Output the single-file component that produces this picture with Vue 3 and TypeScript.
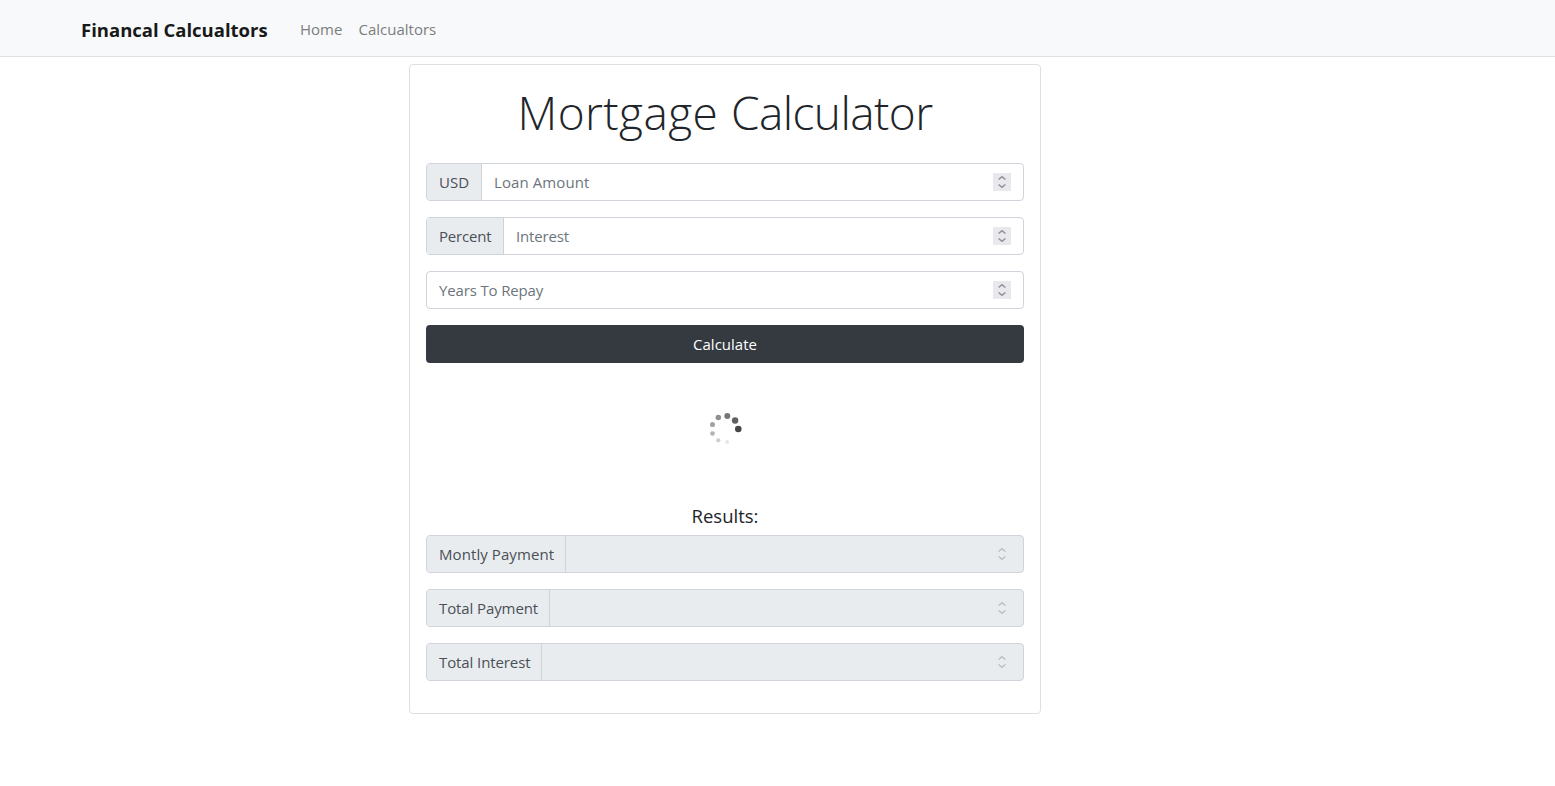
<script setup lang="ts">
import { ref } from 'vue'

interface Field {
  id: string
  prefix?: string
  hint?: string
}

const inputs: Field[] = [
  { id: 'usd', prefix: 'USD', hint: 'Loan Amount' },
  { id: 'percent', prefix: 'Percent', hint: 'Interest' },
  { id: 'years', hint: 'Years To Repay' },
]
const results: Field[] = [
  { id: 'monthly', prefix: 'Montly Payment' },
  { id: 'total', prefix: 'Total Payment' },
  { id: 'interest', prefix: 'Total Interest' },
]
const dots = [
  { x: 30.3, y: 17, r: 3.3, c: '#464646' },
  { x: 27.1, y: 8.5, r: 3.2, c: '#5f5f5f' },
  { x: 19.3, y: 4, r: 3, c: '#777' },
  { x: 10.3, y: 5.5, r: 2.75, c: '#8f8f8f' },
  { x: 4.5, y: 12.5, r: 2.55, c: '#a3a3a3' },
  { x: 4.5, y: 21.5, r: 2.35, c: '#b4b4b4' },
  { x: 10.3, y: 28.3, r: 2.1, c: '#cfcfcf' },
  { x: 19.1, y: 30, r: 2, c: '#e6e6e6' },
]
const values = ref<Record<string, string>>({})
</script>

<template>
  <nav class="navbar">
    <a class="brand">Financal Calcualtors</a>
    <a class="link home">Home</a>
    <a class="link calcs">Calcualtors</a>
  </nav>
  <main class="card">
    <h1><span class="wide">Mortgage</span> <span class="tight">Calculator</span></h1>
    <form @submit.prevent>
      <div v-for="f in inputs" :key="f.id" class="group" :class="f.id">
        <span v-if="f.prefix" class="prefix"><span>{{ f.prefix }}</span></span>
        <input v-model="values[f.id]" :placeholder="f.hint" />
        <svg class="stepper" viewBox="0 0 18 18"><path d="M5.6 6.5 9 3.7l3.4 2.8M5.6 11.5 9 14.3l3.4-2.8" /></svg>
      </div>
      <button type="submit">Calculate</button>
    </form>
    <div class="loading">
      <svg width="34" height="34" viewBox="0 0 34 34">
        <circle v-for="d in dots" :key="d.r" :cx="d.x" :cy="d.y" :r="d.r" :fill="d.c" />
      </svg>
    </div>
    <h5>Results:</h5>
    <div v-for="f in results" :key="f.id" class="group disabled" :class="f.id">
      <span class="prefix"><span>{{ f.prefix }}</span></span>
      <input disabled />
      <svg class="stepper" viewBox="0 0 18 18"><path d="M5.6 6.5 9 3.7l3.4 2.8M5.6 11.5 9 14.3l3.4-2.8" /></svg>
    </div>
  </main>
</template>

<style>
body {
  background: #fff;
  overflow: hidden;
}
</style>

<style scoped>
* {
  box-sizing: border-box;
}
.navbar,
.card,
input,
button {
  font-family: 'Open Sans', 'Noto Sans', sans-serif;
  font-size: 15px;
  line-height: 24px;
  white-space: nowrap;
}
.navbar {
  display: flex;
  align-items: center;
  height: 57px;
  padding: 3px 0 0 81px;
  background: #f8f9fa;
  border-bottom: 1px solid #dee2e6;
}
.brand {
  width: 219px;
  color: #191919;
  font-size: 18.5px;
  font-weight: 700;
}
.link {
  padding-bottom: 2px;
  color: #7c7d7d;
}
.home {
  width: 58.5px;
}
.card {
  width: 632px;
  height: 650px;
  margin: 7px 0 0 409px;
  padding: 16px;
  border: 1px solid #dfdfdf;
  border-radius: 4px;
}
h1 {
  margin: 0;
  height: 82px;
  padding-top: 2px;
  color: #212529;
  font-size: 46px;
  font-weight: 300;
  line-height: 58px;
  text-align: center;
}
.wide {
  letter-spacing: 0.4px;
}
.tight {
  margin-left: 1px;
  letter-spacing: -0.6px;
}
.group {
  display: flex;
  align-items: center;
  height: 38px;
  margin-bottom: 16px;
  padding-right: 12px;
  background: #fff;
  border: 1px solid #ced4da;
  border-radius: 4px;
  overflow: hidden;
}
.prefix {
  flex: none;
  height: 36px;
  padding: 6px 0 0 12px;
  background: #e9ecef;
  border-right: 1px solid #ced4da;
  color: #495057;
}
.usd .prefix {
  width: 55px;
}
.percent .prefix {
  width: 77px;
  letter-spacing: -0.2px;
}
.monthly .prefix {
  width: 139px;
  letter-spacing: 0.08px;
}
.total .prefix {
  width: 123px;
  letter-spacing: -0.1px;
}
.interest .prefix {
  width: 115px;
  letter-spacing: -0.1px;
}
input {
  flex: 1;
  min-width: 0;
  height: 36px;
  padding: 0 12px 1px;
  border: 0;
  outline: 0;
  background: transparent;
  color: #495057;
}
.usd input {
  letter-spacing: 0.1px;
}
.percent input,
.years input {
  letter-spacing: -0.15px;
}
input::placeholder {
  color: #6c757d;
  opacity: 1;
}
.stepper {
  flex: none;
  width: 18px;
  height: 18px;
  background: #e9e9ed;
  fill: none;
  stroke: #8f8f9d;
  stroke-width: 1.5;
}
.disabled,
.disabled .stepper {
  background: #e9ecef;
}
.disabled .stepper {
  stroke: #bcbec6;
}
button {
  display: block;
  width: 100%;
  height: 38px;
  padding: 0 0 1px;
  border: 0;
  border-radius: 4px;
  background: #343a40;
  color: #fff;
}
.loading {
  display: flex;
  justify-content: center;
  height: 140px;
  padding-top: 49px;
}
h5 {
  height: 32px;
  margin: 0;
  padding-top: 1px;
  color: #212529;
  font-size: 18.5px;
  font-weight: 400;
  text-align: center;
}
</style>
